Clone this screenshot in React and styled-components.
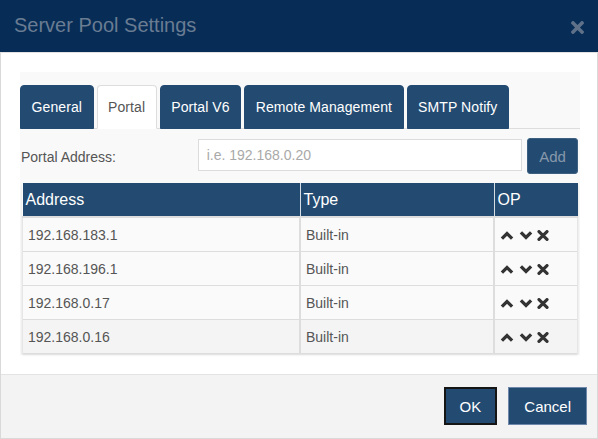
import { styled, createGlobalStyle } from "styled-components";
import { FaTimes } from "react-icons/fa";

const GlobalStyle = createGlobalStyle`
  html, body {
    margin: 0;
    padding: 0;
    background: #ffffff;
  }
  body {
    font-family: "Liberation Sans", Arial, sans-serif;
  }
`;

const tabs = ["General", "Portal", "Portal V6", "Remote Management", "SMTP Notify"];

const portals = [
  { address: "192.168.183.1", type: "Built-in" },
  { address: "192.168.196.1", type: "Built-in" },
  { address: "192.168.0.17", type: "Built-in" },
  { address: "192.168.0.16", type: "Built-in" },
];

const ChevronUp = () => (
  <svg width="14" height="9" viewBox="0 0 14 9">
    <polyline points="1.9,7.6 7,2.5 12.1,7.6" fill="none" stroke="currentColor" strokeWidth="3.3" />
  </svg>
);

const ChevronDown = () => (
  <svg width="14" height="9" viewBox="0 0 14 9">
    <polyline points="1.9,1.4 7,6.5 12.1,1.4" fill="none" stroke="currentColor" strokeWidth="3.3" />
  </svg>
);

const Cross = () => (
  <svg width="12" height="11" viewBox="0 0 12 11">
    <path d="M2 1.6 L10 9.4 M10 1.6 L2 9.4" fill="none" stroke="currentColor" strokeWidth="3.2" strokeLinecap="round" />
  </svg>
);

const App = () => {
  return (
    <>
      <GlobalStyle />
      <Modal>
        <Header>
          <Title>Server Pool Settings</Title>
          <Close>
            <FaTimes size={19} />
          </Close>
        </Header>

        <Body>
          <Panel>
            <TabBar>
              {tabs.map((t) => (
                <Tab key={t} $active={t === "Portal"}>
                  {t}
                </Tab>
              ))}
            </TabBar>

            <Content>
              <FormRow>
                <Label>Portal Address:</Label>
                <Input placeholder="i.e. 192.168.0.20" />
                <AddButton>Add</AddButton>
              </FormRow>

              <Table>
                <thead>
                  <tr>
                    <Th style={{ width: 271 }}>Address</Th>
                    <Th style={{ width: 187 }}>Type</Th>
                    <Th>OP</Th>
                  </tr>
                </thead>
                <tbody>
                  {portals.map((p, i) => (
                    <Row key={p.address} $last={i === portals.length - 1}>
                      <Td>{p.address}</Td>
                      <Td>{p.type}</Td>
                      <Td>
                        <Ops>
                          <ChevronUp />
                          <ChevronDown />
                          <Cross />
                        </Ops>
                      </Td>
                    </Row>
                  ))}
                </tbody>
              </Table>
            </Content>
          </Panel>
        </Body>

        <Footer>
          <FooterButton $focused>OK</FooterButton>
          <FooterButton>Cancel</FooterButton>
        </Footer>
      </Modal>
    </>
  );
};

const Modal = styled.div`
  width: 598px;
  height: 439px;
  box-sizing: border-box;
  border: 1px solid #d9d9d9;
  border-top: none;
  display: flex;
  flex-direction: column;
  background: #fff;
`;

const Header = styled.div`
  height: 52px;
  margin: 0 -1px;
  background: #072d57;
  border-bottom: 1px solid #e2e2e2;
  display: flex;
  align-items: center;
  justify-content: space-between;
  padding: 0 11px 0 14px;
`;

const Title = styled.h4`
  margin: 0;
  font-size: 20px;
  font-weight: 400;
  color: #6a7c92;
  padding-bottom: 2px;
`;

const Close = styled.span`
  display: flex;
  color: #5f7189;
  margin-top: 2px;
`;

const Body = styled.div`
  flex: 1;
  padding: 19px 17px 0 19px;
`;

const Panel = styled.div`
  background: #f9f9f9;
  padding: 13px 0 2px 0;
`;

const TabBar = styled.div`
  display: flex;
  border-bottom: 1px solid #dddddd;
  height: 43px;
`;

const Tab = styled.div`
  box-sizing: border-box;
  height: 44px;
  padding: 0 10.5px;
  margin-right: 3px;
  display: flex;
  align-items: center;
  font-size: 14px;
  letter-spacing: 0.1px;
  border-radius: 4px 4px 0 0;
  border: 1px solid ${(p) => (p.$active ? "#dddddd" : "#234b71")};
  border-bottom-color: ${(p) => (p.$active ? "#ffffff" : "#234b71")};
  background: ${(p) => (p.$active ? "#ffffff" : "#234b71")};
  color: ${(p) => (p.$active ? "#555555" : "#ffffff")};
`;

const Content = styled.div`
  padding: 10px 2px 0 1px;
`;

const FormRow = styled.div`
  display: flex;
  align-items: center;
  height: 36px;
`;

const Label = styled.label`
  width: 177px;
  font-size: 14px;
  color: #555555;
`;

const Input = styled.input`
  box-sizing: border-box;
  width: 325px;
  height: 32px;
  margin-top: -4px;
  border: 1px solid #dcdcdc;
  background: #fff;
  padding: 0 8px;
  font-size: 14px;
  font-family: "Liberation Sans", Arial, sans-serif;
  color: #555;
  outline: none;
  &::placeholder {
    color: #a9a9a9;
  }
`;

const AddButton = styled.button`
  box-sizing: border-box;
  margin-left: 5px;
  width: 51px;
  height: 36px;
  margin-top: -2px;
  border: 1px solid #3d6080;
  border-radius: 3px;
  background: #234b71;
  color: #8798ab;
  font-size: 15px;
  font-family: "Liberation Sans", Arial, sans-serif;
`;

const Table = styled.table`
  margin: 8px 0 0 1px;
  width: 556px;
  border-collapse: collapse;
  background: #fafafa;
  box-shadow: 0 2px 2px rgba(0, 0, 0, 0.12);
  font-size: 14px;
`;

const Th = styled.th`
  height: 33px;
  padding: 0 3px;
  text-align: left;
  font-size: 16px;
  font-weight: 400;
  color: #ffffff;
  background: #234b71;
  border-left: 1px solid #d6dde5;
  border-bottom: 2px solid #dddddd;
  &:first-child {
    border-left: none;
  }
`;

const Row = styled.tr`
  background: ${(p) => (p.$last ? "#f4f4f4" : "#fafafa")};
`;

const Td = styled.td`
  height: 33px;
  padding: 0 5px;
  color: #555555;
  border-top: 1px solid #dddddd;
  border-left: 2px solid #dddddd;
  border-right: 1px solid #e6e6e6;
  &:first-child {
    border-left: 1px solid #e6e6e6;
  }
`;

const Ops = styled.div`
  display: flex;
  align-items: center;
  color: #333333;
  padding-top: 1px;
  & > svg:nth-child(2) {
    margin-left: 5px;
  }
  & > svg:nth-child(3) {
    margin-left: 4px;
  }
`;

const Footer = styled.div`
  height: 64px;
  box-sizing: border-box;
  background: #f3f3f3;
  border-top: 1px solid #e3e3e3;
  display: flex;
  align-items: center;
  justify-content: flex-end;
  gap: 11px;
  padding: 0 10px 1px 0;
`;

const FooterButton = styled.button`
  box-sizing: border-box;
  height: 38px;
  padding: 0 ${(p) => (p.$focused ? "14px" : "15px")};
  background: #234b71;
  color: #ffffff;
  font-size: 15px;
  font-family: "Liberation Sans", Arial, sans-serif;
  border: ${(p) => (p.$focused ? "2px solid #151515" : "1px solid #6f87ab")};
  border-radius: 0;
`;

export default App;
